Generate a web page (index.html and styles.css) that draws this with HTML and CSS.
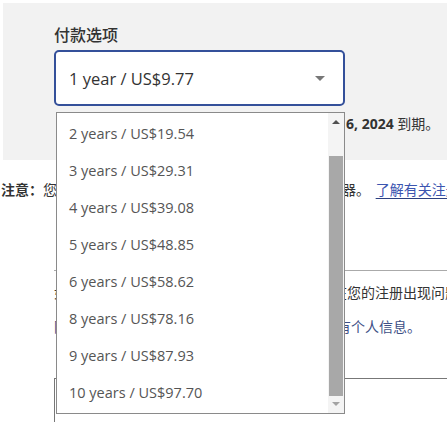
FILE: index.html
```html
<!DOCTYPE html>
<html lang="zh-CN">
<head>
    <meta charset="UTF-8">
    <meta name="viewport" content="width=device-width, initial-scale=1.0">
    <title>付款选项</title>
    <link rel="stylesheet" href="styles.css">
</head>
<body>
    <div class="page">
        <section class="summary">
            <div class="field-label">付款选项</div>
            <div class="select">
                <span class="select-value">1 year / US$9.77</span>
                <i class="caret"></i>
            </div>
            <p class="expiry"><span class="lead">您的域名将于 Dec </span><b>6, 2024</b> 到期。</p>
        </section>

        <p class="note"><b>注意：</b><span class="lead">您的域名将自动连接到我们的默认名称服务</span>器。 <a href="#">了解有关注册的更多信息</a></p>

        <div class="privacy">
            <p><span class="lead">如果您的联系信息发生变化或者</span>在您的注册出现问题时</p>
            <p class="privacy-link"><span class="lead">隐私保护会隐藏您在公开目录中的所</span>有个人信息。</p>
        </div>
        <div class="next"></div>

        <div class="dropdown">
            <ul class="options">
                <li>2 years / US$19.54</li>
                <li>3 years / US$29.31</li>
                <li>4 years / US$39.08</li>
                <li>5 years / US$48.85</li>
                <li>6 years / US$58.62</li>
                <li>8 years / US$78.16</li>
                <li>9 years / US$87.93</li>
                <li>10 years / US$97.70</li>
            </ul>
            <div class="scrollbar">
                <i class="arrow-up"></i>
                <div class="track"><div class="thumb"></div></div>
                <i class="arrow-down"></i>
            </div>
        </div>
    </div>
</body>
</html>
```

FILE: styles.css
```css
body {
    margin: 0;
    font-family: 'Open Sans', 'Noto Sans CJK SC', sans-serif;
    font-size: 14px;
    color: #333;
    background-color: white;
    overflow: hidden;
}

.page {
    position: relative;
    height: 422px;
    overflow: hidden;
}

.summary {
    margin: 3px 0 0 3px;
    padding: 20px 0 0 51px;
    height: 137px;
    background-color: #f2f2f2;
}

.field-label {
    font-size: 16px;
    font-weight: 500;
    line-height: 24px;
    color: #333;
}

.select {
    display: flex;
    align-items: center;
    justify-content: space-between;
    box-sizing: border-box;
    width: 291px;
    height: 56px;
    margin-top: 3px;
    padding: 0 18px 0 13px;
    background-color: white;
    border: 2px solid #34509a;
    border-radius: 5px;
}

.select-value {
    font-size: 16.5px;
}

.caret {
    width: 0;
    height: 0;
    border-left: 5px solid transparent;
    border-right: 5px solid transparent;
    border-top: 5px solid #777;
}

.lead {
    display: inline-block;
    overflow: hidden;
    white-space: nowrap;
    vertical-align: top;
}

.expiry {
    margin: 8px 0 0 4px;
    line-height: 20px;
    white-space: nowrap;
}

.expiry .lead {
    width: 288px;
}

.note {
    margin: 20px 0 0 1px;
    line-height: 20px;
    white-space: nowrap;
}

.note .lead {
    width: 299px;
}

.note a {
    margin-left: 2px;
    color: #3c55b0;
    text-decoration: underline;
    text-decoration-color: #2b3f80;
    text-underline-offset: 3px;
}

.privacy {
    margin: 70px 0 0 54px;
    padding: 12px 0 41px 0;
    border-top: 1px solid #aaa;
    border-bottom: 1px solid #777;
}

.privacy p {
    margin: 0;
    line-height: 20px;
    white-space: nowrap;
}

.privacy .lead {
    width: 279px;
}

.privacy .privacy-link {
    margin-top: 14px;
    color: #3d4f86;
}

.privacy .privacy-link .lead {
    width: 283px;
}

.next {
    margin-left: 54px;
    height: 60px;
    border-left: 1px solid #777;
}

.dropdown {
    position: absolute;
    left: 56px;
    top: 112px;
    display: flex;
    box-sizing: border-box;
    width: 289px;
    height: 302px;
    background-color: white;
    border: 1px solid #8a8a8a;
}

.options {
    flex: 1;
    margin: 0;
    padding: 2px 0 0 0;
    list-style: none;
}

.options li {
    height: 37px;
    line-height: 37px;
    padding-left: 12px;
    font-size: 14.5px;
    color: #555;
    white-space: nowrap;
}

.scrollbar {
    display: flex;
    flex-direction: column;
    align-items: center;
    width: 16px;
    background-color: #f4f4f4;
}

.arrow-up,
.arrow-down {
    width: 0;
    height: 0;
    border-left: 4px solid transparent;
    border-right: 4px solid transparent;
}

.arrow-up {
    margin: 7px 0 6px 0;
    border-bottom: 4px solid #505050;
}

.arrow-down {
    margin: 6px 0 7px 0;
    border-top: 4px solid #a3a3a3;
}

.track {
    flex: 1;
    display: flex;
    flex-direction: column;
    justify-content: flex-end;
    width: 100%;
}

.thumb {
    height: 240px;
    margin: 0 1px;
    background-color: #a8a8a8;
}
```
